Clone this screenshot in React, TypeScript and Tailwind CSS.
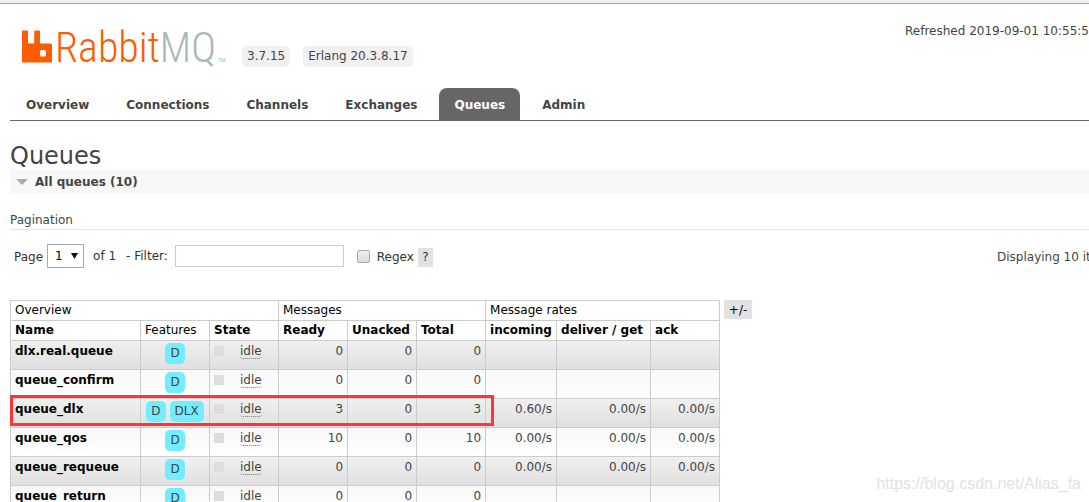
import { clsx } from 'clsx'

type Queue = {
	name: string
	features: string[]
	ready: number
	unacked: number
	total: number
	rates?: [string, string, string]
}

const tabs = ['Overview', 'Connections', 'Channels', 'Exchanges', 'Queues', 'Admin']

const queues: Queue[] = [
	{ name: 'dlx.real.queue', features: ['D'], ready: 0, unacked: 0, total: 0 },
	{ name: 'queue_confirm', features: ['D'], ready: 0, unacked: 0, total: 0 },
	{
		name: 'queue_dlx',
		features: ['D', 'DLX'],
		ready: 3,
		unacked: 0,
		total: 3,
		rates: ['0.60/s', '0.00/s', '0.00/s'],
	},
	{
		name: 'queue_qos',
		features: ['D'],
		ready: 10,
		unacked: 0,
		total: 10,
		rates: ['0.00/s', '0.00/s', '0.00/s'],
	},
	{
		name: 'queue_requeue',
		features: ['D'],
		ready: 0,
		unacked: 0,
		total: 0,
		rates: ['0.00/s', '0.00/s', '0.00/s'],
	},
	{ name: 'queue_return', features: ['D'], ready: 0, unacked: 0, total: 0 },
]

const columns = [
	{ header: 'Name', width: 'w-[130px]' },
	{ header: 'Features', width: 'w-[69px]', plain: true },
	{ header: 'State', width: 'w-[69px]' },
	{ header: 'Ready', width: 'w-[69px]' },
	{ header: 'Unacked', width: 'w-[69px]' },
	{ header: 'Total', width: 'w-[69px]' },
	{ header: 'incoming', width: 'w-[71px]' },
	{ header: 'deliver / get', width: 'w-[94px]' },
	{ header: 'ack', width: 'w-[69px]' },
]

const cell = 'border border-[#ccc] px-1'

const Logo = () => (
	<svg
		aria-label="RabbitMQ"
		className="block overflow-visible"
		height="42"
		role="img"
		viewBox="0 0 206 42"
		width="206"
	>
		<path
			d="M.8 5.500h4.400q.8 0 .8.800V17.500q0 1 1 1h4.200q1 0 1-1V6.300q0-.8.8-.8h4.200q.8 0 .8.800V17.500q0 1 1 1h9.700q1.300 0 1.300 1.300V36.700q0 .8-.8.800H.8Q0 37.500 0 36.700V6.300Q0 5.500.8 5.500ZM19.500 25q-1.500 0-1.500 1.500v3.500q0 1.500 1.500 1.500h3q1.500 0 1.500-1.500V26.500q0-1.500-1.500-1.500Z"
			fill="#ff5c00"
			fillRule="evenodd"
		/>
		<text
			className="font-['Roboto_Condensed',Roboto,sans-serif] font-light"
			fontSize="42"
			x="33"
			y="37"
		>
			<tspan fill="#ff5c00">Rabbit</tspan>
			<tspan fill="#a9b8b2">MQ</tspan>
		</text>
		<text
			className="font-[Roboto,sans-serif]"
			fill="#a9b8b2"
			fontSize="5"
			x="196"
			y="37"
		>
			TM
		</text>
	</svg>
)

const Header = () => (
	<header>
		<div className="flex items-start pt-[21px] pl-3">
			<Logo />
			<div className="mt-[21px] ml-[14px] flex gap-[13px] leading-[21px]">
				<span className="rounded-[5px] bg-[#f0f0f0] px-[5px]">3.7.15</span>
				<span className="rounded-[5px] bg-[#f0f0f0] px-[5px]">Erlang 20.3.8.17</span>
			</div>
			<p className="-mt-[2px] ml-auto w-[184px] whitespace-nowrap leading-4">
				Refreshed 2019-09-01 10:55:54
			</p>
		</div>
		<nav className="mt-[21px] flex gap-[7px] border-[#666] border-b pl-px font-bold">
			{tabs.map((tab) => (
				<a
					className={clsx(
						'rounded-t-lg px-[15px] pt-[2px] leading-[30px]',
						tab === 'Queues' && 'bg-[#666] text-white',
					)}
					href={`#/${tab.toLowerCase()}`}
					key={tab}
				>
					{tab}
				</a>
			))}
		</nav>
	</header>
)

const PaginationForm = () => (
	<form className="mt-[14px] flex h-6 items-center pl-1 text-[#333]">
		<label
			className="pt-[2px]"
			htmlFor="page"
		>
			Page
		</label>
		<div className="relative ml-1">
			<select
				className="block h-6 w-[37px] appearance-none border border-[#aaa] bg-white pl-[7px] text-black"
				id="page"
			>
				<option>1</option>
			</select>
			<svg
				aria-hidden="true"
				className="pointer-events-none absolute top-[9px] right-[6px]"
				height="6"
				viewBox="0 0 7 6"
				width="7"
			>
				<path
					d="M0 0h7L3.500 6Z"
					fill="#111"
				/>
			</svg>
		</div>
		<span className="ml-[9px]">of 1</span>
		<label
			className="ml-[10px]"
			htmlFor="filter"
		>
			- Filter:
		</label>
		<input
			className="ml-[7px] h-[22px] w-[169px] border border-[#ccc] px-1"
			id="filter"
			type="text"
		/>
		<input
			className="ml-[13px] size-[13px] appearance-none rounded-[2px] border border-[#aaa] bg-linear-to-b from-[#eee] to-[#ddd]"
			id="regex"
			type="checkbox"
		/>
		<label
			className="ml-[7px] pt-[2px]"
			htmlFor="regex"
		>
			Regex
		</label>
		<button
			className="mt-[2px] ml-1 h-[19px] w-[15px] bg-[#e2e2e2]"
			type="button"
		>
			?
		</button>
		<span className="ml-auto w-[92px] whitespace-nowrap pt-[2px] text-[#444]">
			Displaying 10 items
		</span>
	</form>
)

const QueueRow = ({ queue }: { queue: Queue }) => (
	<tr className="h-[29px] align-top leading-5 odd:bg-linear-to-b odd:from-[#f0f0f0] odd:to-[#dfdfdf] even:bg-linear-to-b even:from-[#f8f8f8] even:to-white">
		<td className={clsx(cell, 'font-bold text-black')}>
			<a href={`#/queues/${queue.name}`}>{queue.name}</a>
		</td>
		<td className={cell}>
			<div className="mt-[2px] flex justify-center gap-1">
				{queue.features.map((feature) => (
					<abbr
						className="rounded-[5px] bg-[#72edfd] px-[5px] leading-[21px] no-underline"
						key={feature}
					>
						{feature}
					</abbr>
				))}
			</div>
		</td>
		<td className={cell}>
			<div className="flex items-start">
				<span className="mt-[5px] size-[10px] bg-[#ddd]" />
				<span className="mt-1 ml-4 rounded-[3px] border-[#777] border-b border-dotted leading-[13px]">
					idle
				</span>
			</div>
		</td>
		<td className={clsx(cell, 'text-right')}>{queue.ready}</td>
		<td className={clsx(cell, 'text-right')}>{queue.unacked}</td>
		<td className={clsx(cell, 'text-right')}>{queue.total}</td>
		{[0, 1, 2].map((i) => (
			<td
				className={clsx(cell, 'text-right')}
				key={i}
			>
				{queue.rates?.[i]}
			</td>
		))}
	</tr>
)

const QueueTable = () => (
	<div className="relative mt-8 flex items-start gap-1">
		<table className="w-[710px] table-fixed border-collapse">
			<colgroup>
				{columns.map((column) => (
					<col
						className={column.width}
						key={column.header}
					/>
				))}
			</colgroup>
			<thead className="text-left text-black leading-[19px]">
				<tr>
					<th
						className={clsx(cell, 'font-normal')}
						colSpan={3}
					>
						Overview
					</th>
					<th
						className={clsx(cell, 'font-normal')}
						colSpan={3}
					>
						Messages
					</th>
					<th
						className={clsx(cell, 'font-normal')}
						colSpan={3}
					>
						Message rates
					</th>
				</tr>
				<tr>
					{columns.map((column) => (
						<th
							className={clsx(cell, 'whitespace-nowrap', column.plain ? 'font-normal' : 'font-bold')}
							key={column.header}
						>
							{column.header}
						</th>
					))}
				</tr>
			</thead>
			<tbody>
				{queues.map((queue) => (
					<QueueRow
						key={queue.name}
						queue={queue}
					/>
				))}
			</tbody>
		</table>
		<button
			className="h-[19px] w-7 bg-[#e2e2e2] text-black"
			type="button"
		>
			+/-
		</button>
		<div className="pointer-events-none absolute top-[95px] left-0 h-[31px] w-[484px] border-3 border-[#fc3636]" />
	</div>
)

export default function App() {
	return (
		<div className="relative h-screen overflow-hidden bg-white font-['DejaVu_Sans',Verdana,sans-serif] text-[#444] text-xs">
			<div className="h-1 border-[#aaa] border-b bg-[#f1f1f1]" />
			<div className="pl-[10px]">
				<Header />
				<main>
					<h1 className="pt-[22px] text-2xl leading-[26px]">Queues</h1>
					<h2 className="flex h-[25px] items-center bg-[#f8f8f8] pl-[6px] font-bold">
						<svg
							aria-hidden="true"
							height="6"
							viewBox="0 0 12 6"
							width="12"
						>
							<path
								d="M0 0h12L6 6Z"
								fill="#aaa"
							/>
						</svg>
						<span className="ml-[7px]">All queues (10)</span>
					</h2>
					<h3 className="mt-[18px] border-[#e4e4e4] border-b leading-[17px]">Pagination</h3>
					<PaginationForm />
					<QueueTable />
				</main>
			</div>
			<p className="absolute right-2 bottom-2 font-['Liberation_Sans',Arial,sans-serif] text-[#e2e2e2] text-base leading-5">
				https://blog.csdn.net/Alias_fa
			</p>
		</div>
	)
}
